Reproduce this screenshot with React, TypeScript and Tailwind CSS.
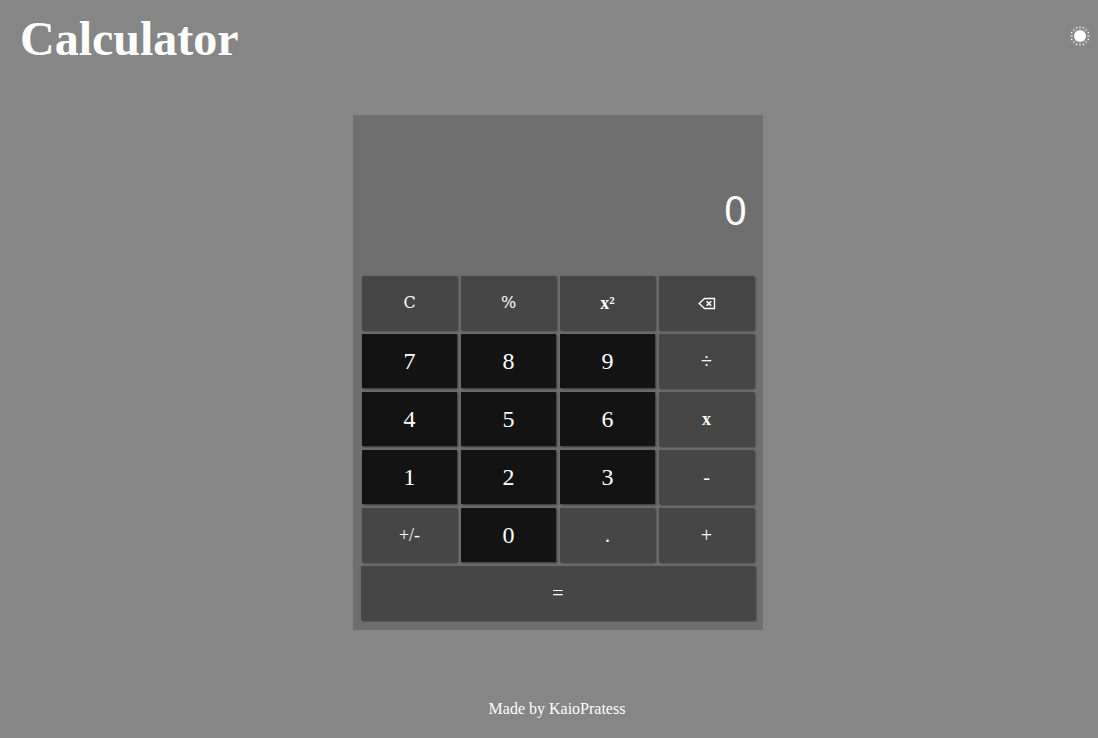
import { useState } from "react";
import type { ReactNode } from "react";

type Tone = "digit" | "operator";

interface KeyDef {
  label: string;
  name?: string;
  tone: Tone;
  text: string;
  content?: ReactNode;
}

const DIGIT = "text-2xl";
const SIGN = "text-xl";
const SMALL = "text-lg";
const BOLD = "text-lg font-bold";
const SLAB = "font-['DejaVu_Serif',serif] text-base";

function BackspaceIcon() {
  return (
    <svg width="18" height="14" viewBox="0 0 18 14" fill="none" stroke="currentColor" aria-hidden="true">
      <path d="M6.5 2.5H16.5V12.5H6.5L1.2 7.5Z" strokeWidth="1.3" />
      <path d="M8.6 5.2L13.2 9.8M13.2 5.2L8.6 9.8" strokeWidth="1.6" />
    </svg>
  );
}

function SunIcon() {
  const rays = Array.from({ length: 8 }, (_, i) => i * 45);
  return (
    <svg width="20" height="20" viewBox="0 0 20 20" fill="currentColor" aria-hidden="true">
      <circle cx="10" cy="10" r="6" />
      {rays.map((angle) => (
        <g key={angle}>
          <rect x="9" y="0.2" width="2" height="2.8" opacity="0.4" transform={`rotate(${angle} 10 10)`} />
          <circle cx="10" cy="1" r="0.8" transform={`rotate(${angle + 22.5} 10 10)`} />
        </g>
      ))}
    </svg>
  );
}

const digit = (label: string): KeyDef => ({ label, tone: "digit", text: DIGIT });

const keys: KeyDef[] = [
  { label: "C", tone: "operator", text: SLAB },
  { label: "%", tone: "operator", text: SLAB },
  { label: "x²", tone: "operator", text: BOLD },
  { label: "del", name: "Backspace", tone: "operator", text: SMALL, content: <BackspaceIcon /> },
  digit("7"),
  digit("8"),
  digit("9"),
  { label: "÷", tone: "operator", text: SIGN },
  digit("4"),
  digit("5"),
  digit("6"),
  { label: "x", tone: "operator", text: BOLD },
  digit("1"),
  digit("2"),
  digit("3"),
  { label: "-", tone: "operator", text: SIGN },
  { label: "+/-", tone: "operator", text: SMALL },
  digit("0"),
  { label: ".", tone: "operator", text: SIGN },
  { label: "+", tone: "operator", text: SIGN },
];

const KEY = "flex h-[54px] cursor-pointer items-center justify-center shadow-[1px_1px_2px_#333333]";

function calculate(a: number, op: string, b: number) {
  if (op === "+") return a + b;
  if (op === "-") return a - b;
  if (op === "x") return a * b;
  return a / b;
}

export default function App() {
  const [display, setDisplay] = useState("0");
  const [stored, setStored] = useState<number | null>(null);
  const [operator, setOperator] = useState("");
  const [fresh, setFresh] = useState(true);
  const [light, setLight] = useState(false);

  const press = (label: string) => {
    const value = Number(display);
    if (/^\d$/.test(label)) {
      setDisplay(fresh || display === "0" ? label : display + label);
      setFresh(false);
    } else if (label === ".") {
      if (fresh) setDisplay("0.");
      else if (!display.includes(".")) setDisplay(display + ".");
      setFresh(false);
    } else if (label === "C") {
      setDisplay("0");
      setStored(null);
      setOperator("");
      setFresh(true);
    } else if (label === "del") {
      setDisplay(display.length > 1 ? display.slice(0, -1) : "0");
    } else if (label === "%") {
      setDisplay(String(value / 100));
    } else if (label === "x²") {
      setDisplay(String(value * value));
    } else if (label === "+/-") {
      setDisplay(String(value === 0 ? 0 : -value));
    } else {
      const result = operator && stored !== null && !fresh ? calculate(stored, operator, value) : value;
      setDisplay(String(result));
      setStored(result);
      setOperator(label === "=" ? "" : label);
      setFresh(true);
    }
  };

  return (
    <div
      className={`flex min-h-screen flex-col font-['Liberation_Serif',serif] text-white ${
        light ? "bg-[#a8a8a8]" : "bg-[#868686]"
      }`}
    >
      <header className="flex items-start justify-between pt-2 pr-2 pl-5">
        <h1 className="text-5xl leading-[62px] font-bold">Calculator</h1>
        <button
          type="button"
          aria-label="Toggle theme"
          className="mt-[18px] cursor-pointer"
          onClick={() => setLight(!light)}
        >
          <SunIcon />
        </button>
      </header>

      <main className="mt-[45px] flex justify-center pl-[18px]">
        <section aria-label="Calculator" className="w-full max-w-[410px] bg-[#6f6f6f] px-2 pb-[10px]">
          <output className="flex h-[161px] items-center justify-end overflow-hidden pt-7 pr-2 font-['Noto_Sans',sans-serif] text-[40px] leading-none">
            {display}
          </output>
          <div className="grid grid-cols-4 gap-1 px-px">
            {keys.map((key) => (
              <button
                key={key.label}
                type="button"
                aria-label={key.name}
                onClick={() => press(key.label)}
                className={`${KEY} ${key.text} ${key.tone === "digit" ? "bg-[#131313]" : "bg-[#464646]"}`}
              >
                {key.content ?? key.label}
              </button>
            ))}
          </div>
          <button type="button" onClick={() => press("=")} className={`${KEY} mt-1 w-full bg-[#464646] text-xl`}>
            =
          </button>
        </section>
      </main>

      <footer className="mt-[67px] pb-4 pl-4 text-center text-base leading-6">Made by KaioPratess</footer>
    </div>
  );
}
